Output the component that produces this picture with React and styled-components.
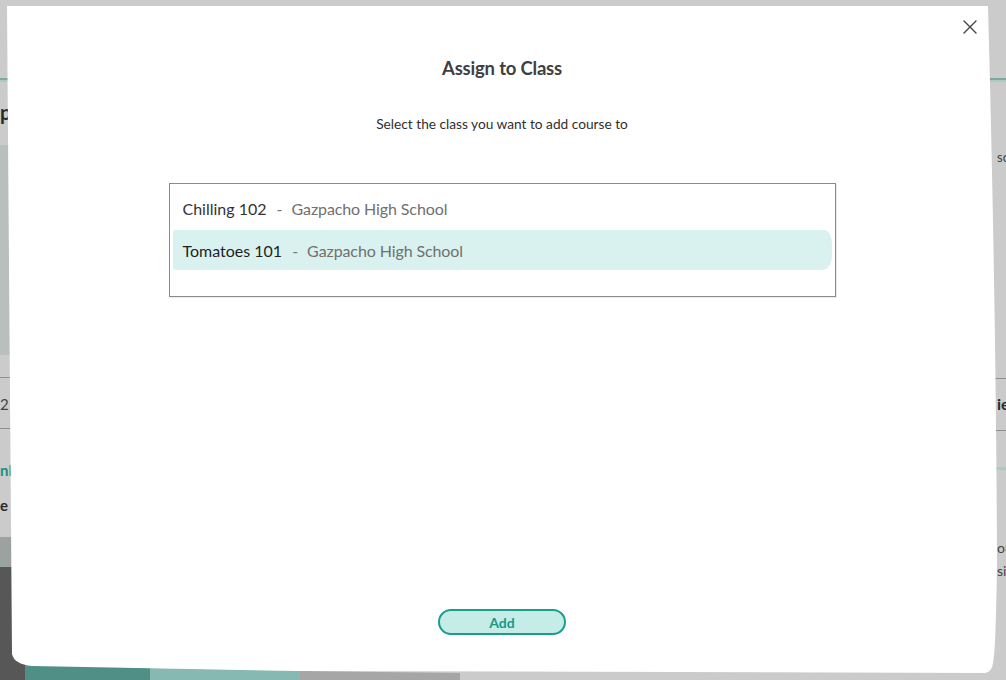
import React from "react";
import styled, { createGlobalStyle } from "styled-components";

const Global = createGlobalStyle`
  html, body { margin: 0; padding: 0; }
  body {
    width: 1006px;
    height: 680px;
    overflow: hidden;
    background: #cbcbcb;
    font-family: Lato, "Open Sans", sans-serif;
  }
`;

const Screen = styled.div`
  position: relative;
  width: 1006px;
  height: 680px;
  overflow: hidden;
  background: #cbcbcb;
`;

const Page = styled.div`
  display: grid;
  grid-template-columns: 503px 503px;
  height: 680px;
`;

const Column = styled.div`
  display: flex;
  flex-direction: column;
  overflow: hidden;
`;

const Rule = styled.div`
  width: 100%;
  flex-shrink: 0;
  height: ${(p) => p.$h || 1}px;
  background: ${(p) => p.$c || "#9a9a9a"};
  margin-top: ${(p) => p.$mt || 0}px;
`;

const PeekText = styled.div`
  width: 100%;
  box-sizing: border-box;
  font-size: ${(p) => p.$size || 14}px;
  font-weight: ${(p) => p.$weight || 400};
  color: ${(p) => p.$color || "#333"};
  line-height: ${(p) => p.$lh || 18}px;
  margin-top: ${(p) => p.$mt || 0}px;
  white-space: nowrap;
  padding-left: ${(p) => p.$indent || 0}px;
`;

const Block = styled.div`
  width: ${(p) => (p.$w ? `${p.$w}px` : "100%")};
  flex-shrink: 0;
  height: ${(p) => p.$h}px;
  background: ${(p) => p.$c};
  margin-top: ${(p) => p.$mt || 0}px;
`;

const Modal = styled.div`
  position: absolute;
  inset: 0;
  display: flex;
  flex-direction: column;
  align-items: center;
  padding: 57px 2px 0 0;
  box-sizing: border-box;
`;

const ModalShape = styled.svg`
  position: absolute;
  inset: 0;
  width: 1006px;
  height: 680px;
  pointer-events: none;
`;

const CloseButton = styled.button`
  position: absolute;
  top: 19px;
  left: 962px;
  width: 16px;
  height: 16px;
  padding: 0;
  border: none;
  background: none;
  cursor: pointer;
  display: flex;
  align-items: center;
  justify-content: center;
`;

const Title = styled.h2`
  position: relative;
  margin: 0;
  font-size: 18.5px;
  line-height: 22px;
  font-weight: 700;
  color: #3f3f3f;
  letter-spacing: -0.2px;
`;

const Subtitle = styled.p`
  position: relative;
  margin: 34px 0 0;
  font-size: 13.7px;
  line-height: 22px;
  color: #2f2f2f;
`;

const ClassList = styled.div`
  position: relative;
  margin-top: 48px;
  width: 667px;
  height: 114px;
  box-sizing: border-box;
  border: 1px solid #8a8a8a;
  box-shadow: 1px 1px 0 rgba(0, 0, 0, 0.08);
  padding: 4px 3px 0 3px;
  display: flex;
  flex-direction: column;
  gap: 2px;
`;

const ClassRow = styled.div`
  height: 40px;
  display: flex;
  align-items: center;
  padding-left: 10px;
  font-size: 16px;
  background: ${(p) => (p.$selected ? "#daf2ef" : "transparent")};
  border-radius: ${(p) => (p.$selected ? "2px 8px 10px 3px / 2px 14px 14px 3px" : "0")};
  cursor: pointer;
`;

const ClassName = styled.span`
  color: ${(p) => (p.$selected ? "#1f1f1f" : "#333")};
`;

const Separator = styled.span`
  color: #777;
  margin: 0 9px 0 10px;
`;

const School = styled.span`
  color: #707070;
  letter-spacing: -0.1px;
`;

const Spacer = styled.div`
  flex: 1;
`;

const AddButton = styled.button`
  position: relative;
  margin-bottom: 45px;
  width: 128px;
  height: 26px;
  border: 2px solid #1a9e8e;
  border-radius: 13px;
  background: #c6ece7;
  color: #17998a;
  font-family: Lato, "Open Sans", sans-serif;
  font-size: 14px;
  font-weight: 700;
  cursor: pointer;
  padding: 0;
`;

const classes = [
  { name: "Chilling 102", school: "Gazpacho High School" },
  { name: "Tomatoes 101", school: "Gazpacho High School", selected: true },
];

export default function App() {
  return (
    <Screen>
      <Global />
      <Page>
        <Column>
          <Block $h={78} $c="#cbcbcb" />
          <Rule $h={2} $c="#7fa8a1" />
          <Rule $h={2} $c="#a8cbc4" />
          <PeekText $size={20} $weight={700} $mt={18} $lh={24} $color="#2a2a2a">
            p
          </PeekText>
          <Block $h={210} $c="#b9bfbd" $mt={21} />
          <Rule $mt={22} $c="#8f8f8f" />
          <PeekText $mt={17} $size={15} $color="#444">
            2
          </PeekText>
          <Rule $mt={15} $c="#8f8f8f" />
          <PeekText $mt={32} $size={15} $weight={700} $color="#17907f">
            nl
          </PeekText>
          <PeekText $mt={17} $size={15} $weight={700} $color="#2a2a2a">
            e
          </PeekText>
          <Block $w={40} $h={30} $c="#9aa3a0" $mt={23} />
          <Block $w={40} $h={120} $c="#575757" />
        </Column>
        <Column>
          <Block $h={78} $c="#cbcbcb" />
          <Rule $h={2} $c="#7fa8a1" />
          <Rule $h={2} $c="#a8cbc4" />
          <PeekText $mt={66} $size={13} $color="#444" $indent={494}>
            sc
          </PeekText>
          <Rule $mt={212} $c="#8f8f8f" />
          <PeekText $mt={16} $size={16} $weight={700} $color="#2a2a2a" $indent={494}>
            ie
          </PeekText>
          <Rule $mt={17} $c="#8f8f8f" />
          <Rule $mt={36} $h={3} $c="#a8cbc4" />
          <PeekText $mt={69} $size={14} $color="#444" $indent={494}>
            ou
          </PeekText>
          <PeekText $mt={5} $size={14} $color="#444" $indent={494}>
            si
          </PeekText>
        </Column>
      </Page>

      <ModalShape viewBox="0 0 1006 680">
        <path d="M25 664 L150 668 L150 680 L25 680 Z" fill="#4f8f86" />
        <path d="M150 668 L300 671 L300 680 L150 680 Z" fill="#86b9b1" />
        <path d="M300 671 L460 673 L460 680 L300 680 Z" fill="#a6a6a6" />
        <path
          d="M7 6 L988 6 Q996 300 997 560 Q996 648 993 663 Q992 672 985 673 L300 671 L32 666 Q14 664 12 654 Z"
          fill="#ffffff"
        />
      </ModalShape>

      <Modal role="dialog" aria-label="Assign to Class">
        <CloseButton aria-label="Close">
          <svg width="14" height="14" viewBox="0 0 14 14">
            <path d="M1 1 L13 13 M13 1 L1 13" stroke="#444" strokeWidth="1.4" strokeLinecap="round" />
          </svg>
        </CloseButton>
        <Title>Assign to Class</Title>
        <Subtitle>Select the class you want to add course to</Subtitle>
        <ClassList>
          {classes.map((c) => (
            <ClassRow key={c.name} $selected={c.selected}>
              <ClassName $selected={c.selected}>{c.name}</ClassName>
              <Separator>-</Separator>
              <School>{c.school}</School>
            </ClassRow>
          ))}
        </ClassList>
        <Spacer />
        <AddButton>Add</AddButton>
      </Modal>
    </Screen>
  );
}
